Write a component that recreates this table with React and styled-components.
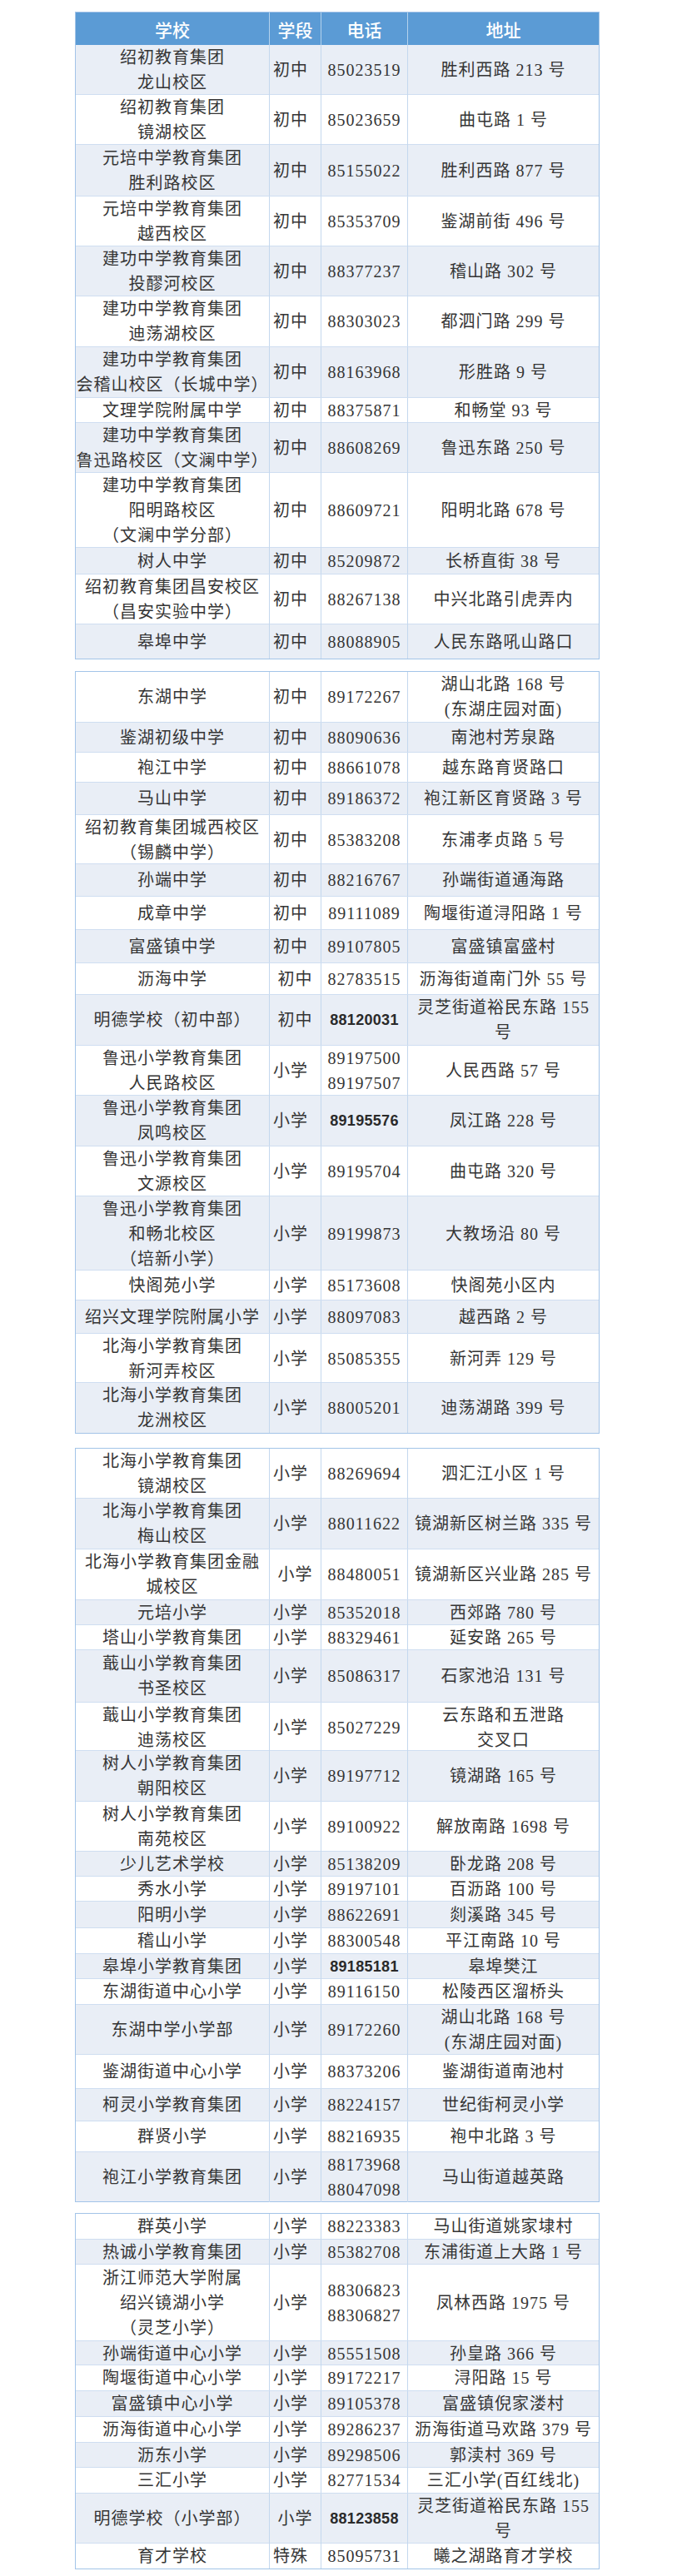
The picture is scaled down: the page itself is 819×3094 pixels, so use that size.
import React from 'react';
import styled, { createGlobalStyle } from 'styled-components';

const GlobalStyle = createGlobalStyle`
  *, *::before, *::after { box-sizing: border-box; }
  html, body { margin: 0; padding: 0; background: #ffffff; }
  body {
    font-family: "Liberation Serif", "Noto Sans CJK SC", serif;
    color: #353535;
  }
`;

const Page = styled.main`
  width: 819px;
  padding: 14px 0 16px 90px;
  display: flex;
  flex-direction: column;
`;

const Table = styled.section`
  width: 630px;
  margin-top: ${(p) => p.$gap || 0}px;
  border: 1px solid #a3c4e8;
  display: flex;
  flex-direction: column;
`;

const Row = styled.div`
  display: grid;
  grid-template-columns: 233px 62px 104px 1fr;
  height: ${(p) => p.$h}px;
  background: ${(p) => (p.$shade ? '#e9eef6' : '#ffffff')};
  border-bottom: 1px solid #cfdef1;
  &:last-child { border-bottom: none; }
`;

const HeaderRow = styled(Row)`
  background: #5b9bd5;
  border-bottom: none;
`;

const Cell = styled.div`
  display: flex;
  flex-direction: column;
  justify-content: center;
  align-items: ${(p) => (p.$start ? 'flex-start' : 'center')};
  padding-left: ${(p) => (p.$start ? 4 : 0)}px;
  text-align: center;
  border-right: 1px solid #c4d8ee;
  font-size: 20px;
  line-height: 30px;
  letter-spacing: 1px;
  white-space: nowrap;
  overflow: visible;
  &:last-child { border-right: none; }
`;

const PhoneCell = styled(Cell)`
  font-family: ${(p) => (p.$alt ? '"Liberation Sans", "Noto Sans CJK SC", sans-serif' : 'inherit')};
  font-weight: ${(p) => (p.$alt ? 700 : 400)};
  font-size: ${(p) => (p.$alt ? 18 : 20)}px;
  letter-spacing: ${(p) => (p.$alt ? 0.3 : 1)}px;
  color: ${(p) => (p.$alt ? '#2a2a2a' : 'inherit')};
`;

const HeadCell = styled.div`
  display: flex;
  align-items: center;
  justify-content: center;
  color: #ffffff;
  font-family: "Noto Sans CJK SC", "Noto Sans", sans-serif;
  font-weight: 500;
  font-size: 21px;
  border-right: 1px solid rgba(255, 255, 255, 0.55);
  &:last-child { border-right: none; }
`;

const Line = styled.span`
  display: block;
`;

const Lines = ({ text }) =>
  text.split('|').map((t, i) => <Line key={i}>{t}</Line>);

const R = (s, g, p, a, h, opts = {}) => ({ s, g, p, a, h, ...opts });

const block1 = [
  R('绍初教育集团|龙山校区', '初中', '85023519', '胜利西路 213 号', 60),
  R('绍初教育集团|镜湖校区', '初中', '85023659', '曲屯路 1 号', 60),
  R('元培中学教育集团|胜利路校区', '初中', '85155022', '胜利西路 877 号', 62),
  R('元培中学教育集团|越西校区', '初中', '85353709', '鉴湖前街 496 号', 60),
  R('建功中学教育集团|投醪河校区', '初中', '88377237', '稽山路 302 号', 60),
  R('建功中学教育集团|迪荡湖校区', '初中', '88303023', '都泗门路 299 号', 61),
  R('建功中学教育集团|会稽山校区（长城中学）', '初中', '88163968', '形胜路 9 号', 61),
  R('文理学院附属中学', '初中', '88375871', '和畅堂 93 号', 30),
  R('建功中学教育集团|鲁迅路校区（文澜中学）', '初中', '88608269', '鲁迅东路 250 号', 60),
  R('建功中学教育集团|阳明路校区|（文澜中学分部）', '初中', '88609721', '阳明北路 678 号', 90),
  R('树人中学', '初中', '85209872', '长桥直街 38 号', 32),
  R('绍初教育集团昌安校区|（昌安实验中学）', '初中', '88267138', '中兴北路引虎弄内', 60),
  R('皋埠中学', '初中', '88088905', '人民东路吼山路口', 41),
];

const block2 = [
  R('东湖中学', '初中', '89172267', '湖山北路 168 号|(东湖庄园对面)', 61),
  R('鉴湖初级中学', '初中', '88090636', '南池村芳泉路', 36),
  R('袍江中学', '初中', '88661078', '越东路育贤路口', 36),
  R('马山中学', '初中', '89186372', '袍江新区育贤路 3 号', 39),
  R('绍初教育集团城西校区|（锡麟中学）', '初中', '85383208', '东浦孝贞路 5 号', 59),
  R('孙端中学', '初中', '88216767', '孙端街道通海路', 39),
  R('成章中学', '初中', '89111089', '陶堰街道浔阳路 1 号', 40),
  R('富盛镇中学', '初中', '89107805', '富盛镇富盛村', 40),
  R('沥海中学', '初中', '82783515', '沥海街道南门外 55 号', 38, { c: true }),
  R('明德学校（初中部）', '初中', '88120031', '灵芝街道裕民东路 155|号', 61, { c: true, alt: true }),
  R('鲁迅小学教育集团|人民路校区', '小学', '89197500|89197507', '人民西路 57 号', 60),
  R('鲁迅小学教育集团|凤鸣校区', '小学', '89195576', '凤江路 228 号', 61, { alt: true }),
  R('鲁迅小学教育集团|文源校区', '小学', '89195704', '曲屯路 320 号', 60),
  R('鲁迅小学教育集团|和畅北校区|（培新小学）', '小学', '89199873', '大教场沿 80 号', 89),
  R('快阁苑小学', '小学', '85173608', '快阁苑小区内', 36),
  R('绍兴文理学院附属小学', '小学', '88097083', '越西路 2 号', 40),
  R('北海小学教育集团|新河弄校区', '小学', '85085355', '新河弄 129 号', 59),
  R('北海小学教育集团|龙洲校区', '小学', '88005201', '迪荡湖路 399 号', 60),
];

const block3 = [
  R('北海小学教育集团|镜湖校区', '小学', '88269694', '泗汇江小区 1 号', 60),
  R('北海小学教育集团|梅山校区', '小学', '88011622', '镜湖新区树兰路 335 号', 61),
  R('北海小学教育集团金融|城校区', '小学', '88480051', '镜湖新区兴业路 285 号', 61, { c: true }),
  R('元培小学', '小学', '85352018', '西郊路 780 号', 30),
  R('塔山小学教育集团', '小学', '88329461', '延安路 265 号', 30),
  R('蕺山小学教育集团|书圣校区', '小学', '85086317', '石家池沿 131 号', 63),
  R('蕺山小学教育集团|迪荡校区', '小学', '85027229', '云东路和五泄路|交叉口', 58),
  R('树人小学教育集团|朝阳校区', '小学', '89197712', '镜湖路 165 号', 61),
  R('树人小学教育集团|南苑校区', '小学', '89100922', '解放南路 1698 号', 60),
  R('少儿艺术学校', '小学', '85138209', '卧龙路 208 号', 30),
  R('秀水小学', '小学', '89197101', '百沥路 100 号', 30),
  R('阳明小学', '小学', '88622691', '剡溪路 345 号', 32),
  R('稽山小学', '小学', '88300548', '平江南路 10 号', 31),
  R('皋埠小学教育集团', '小学', '89185181', '皋埠樊江', 30, { alt: true }),
  R('东湖街道中心小学', '小学', '89116150', '松陵西区溜桥头', 31),
  R('东湖中学小学部', '小学', '89172260', '湖山北路 168 号|(东湖庄园对面)', 60),
  R('鉴湖街道中心小学', '小学', '88373206', '鉴湖街道南池村', 41),
  R('柯灵小学教育集团', '小学', '88224157', '世纪街柯灵小学', 39),
  R('群贤小学', '小学', '88216935', '袍中北路 3 号', 37),
  R('袍江小学教育集团', '小学', '88173968|88047098', '马山街道越英路', 59),
];

const block4 = [
  R('群英小学', '小学', '88223383', '马山街道姚家埭村', 31),
  R('热诚小学教育集团', '小学', '85382708', '东浦街道上大路 1 号', 30),
  R('浙江师范大学附属|绍兴镜湖小学|（灵芝小学）', '小学', '88306823|88306827', '凤林西路 1975 号', 92),
  R('孙端街道中心小学', '小学', '85551508', '孙皇路 366 号', 29),
  R('陶堰街道中心小学', '小学', '89172217', '浔阳路 15 号', 31),
  R('富盛镇中心小学', '小学', '89105378', '富盛镇倪家溇村', 31),
  R('沥海街道中心小学', '小学', '89286237', '沥海街道马欢路 379 号', 31),
  R('沥东小学', '小学', '89298506', '郭渎村 369 号', 30),
  R('三汇小学', '小学', '82771534', '三汇小学(百红线北)', 31),
  R('明德学校（小学部）', '小学', '88123858', '灵芝街道裕民东路 155|号', 60, { c: true, alt: true }),
  R('育才学校', '特殊', '85095731', '曦之湖路育才学校', 30),
];

const SchoolTable = ({ rows, gap, header, shadeFirst }) => (
  <Table $gap={gap}>
    {header && (
      <HeaderRow $h={39}>
        <HeadCell>学校</HeadCell>
        <HeadCell>学段</HeadCell>
        <HeadCell>电话</HeadCell>
        <HeadCell>地址</HeadCell>
      </HeaderRow>
    )}
    {rows.map((r, i) => (
      <Row key={i} $h={r.h} $shade={shadeFirst ? i % 2 === 0 : i % 2 === 1}>
        <Cell><Lines text={r.s} /></Cell>
        <Cell $start={!r.c}>{r.g}</Cell>
        <PhoneCell $alt={r.alt}><Lines text={r.p} /></PhoneCell>
        <Cell><Lines text={r.a} /></Cell>
      </Row>
    ))}
  </Table>
);

export default function App() {
  return (
    <>
      <GlobalStyle />
      <Page>
        <SchoolTable rows={block1} header shadeFirst />
        <SchoolTable rows={block2} gap={14} />
        <SchoolTable rows={block3} gap={17} />
        <SchoolTable rows={block4} gap={13} />
      </Page>
    </>
  );
}
